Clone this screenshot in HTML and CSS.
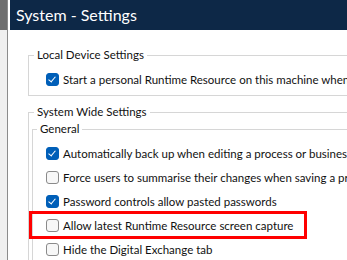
FILE: index.html
```html
<!DOCTYPE html>
<html>
<head>
<meta charset="utf-8">
<link rel="stylesheet" href="styles.css">
</head>
<body>
<div class="app">
  <div class="strip">
    <div class="strip-top"></div>
    <div class="strip-body"></div>
  </div>
  <div class="main">
    <div class="header">System - Settings</div>
    <div class="content">
      <fieldset class="group local">
        <legend>Local Device Settings</legend>
        <div class="row"><span class="cb checked"></span><span class="label">Start a personal Runtime Resource on this machine when the user logs in</span></div>
      </fieldset>
      <fieldset class="group wide">
        <legend>System Wide Settings</legend>
        <fieldset class="group general">
          <legend>General</legend>
          <div class="row"><span class="cb checked"></span><span class="label">Automatically back up when editing a process or business object</span></div>
          <div class="row"><span class="cb"></span><span class="label">Force users to summarise their changes when saving a process</span></div>
          <div class="row"><span class="cb checked"></span><span class="label">Password controls allow pasted passwords</span></div>
          <div class="row highlight"><span class="cb"></span><span class="label">Allow latest Runtime Resource screen capture</span></div>
          <div class="row"><span class="cb"></span><span class="label">Hide the Digital Exchange tab</span></div>
        </fieldset>
      </fieldset>
    </div>
  </div>
</div>
</body>
</html>
```
FILE: styles.css
```css
html, body {
  margin: 0;
  padding: 0;
  background: #ffffff;
  overflow: hidden;
}
body {
  width: 347px;
  height: 260px;
  font-family: Lato, "Liberation Sans", sans-serif;
  font-size: 11.5px;
  color: #111;
}
.app {
  display: flex;
  height: 260px;
}
.strip {
  width: 7px;
  border-right: 1px solid #8c8c8c;
  display: flex;
  flex-direction: column;
  flex: none;
}
.strip-top {
  height: 30px;
  background: #6f6f6f;
}
.strip-body {
  flex: 1;
  background: #f0f0f0;
}
.main {
  flex: 1;
  margin-left: 2px;
  min-width: 0;
  overflow: hidden;
}
.header {
  height: 30px;
  background: #0d2847;
  color: #ffffff;
  font-size: 16px;
  line-height: 30px;
  padding-left: 6px;
  white-space: nowrap;
}
.content {
  padding-top: 17px;
}
.group {
  margin: 0;
  padding: 0;
  border: 1px solid #d6d6d6;
  border-right: none;
  min-width: 0;
}
.group legend {
  padding: 0 3px;
  margin-left: 5px;
  line-height: 16px;
  white-space: nowrap;
}
.local {
  margin-left: 18px;
  padding: 4px 0 4px 0;
}
.local .row {
  padding-left: 17px;
}
.wide {
  margin-left: 18px;
  margin-top: 8px;
  border-bottom: none;
}
.general {
  margin-left: 3px;
  margin-top: 1px;
  padding: 4px 0 0 0;
  border-bottom: none;
}
.general legend {
  margin-left: 4px;
}
.general .row {
  padding-left: 13px;
}
.row {
  height: 24px;
  display: flex;
  align-items: center;
  white-space: nowrap;
}
.cb {
  flex: none;
  width: 11px;
  height: 11px;
  border: 1px solid #8a8a8a;
  border-radius: 3px;
  background: #f7f7f7;
  margin-right: 4px;
  position: relative;
}
.cb.checked {
  background: #005fb8;
  border-color: #005fb8;
}
.cb.checked::after {
  content: "";
  position: absolute;
  left: 3px;
  top: 1px;
  width: 3px;
  height: 6px;
  border: solid #ffffff;
  border-width: 0 1px 1px 0;
  transform: rotate(40deg);
}
.label {
  white-space: nowrap;
}
.highlight {
  position: relative;
}
.highlight::after {
  content: "";
  position: absolute;
  left: -4px;
  top: -2px;
  width: 272px;
  height: 22px;
  border: 3px solid #ff0000;
}
```
